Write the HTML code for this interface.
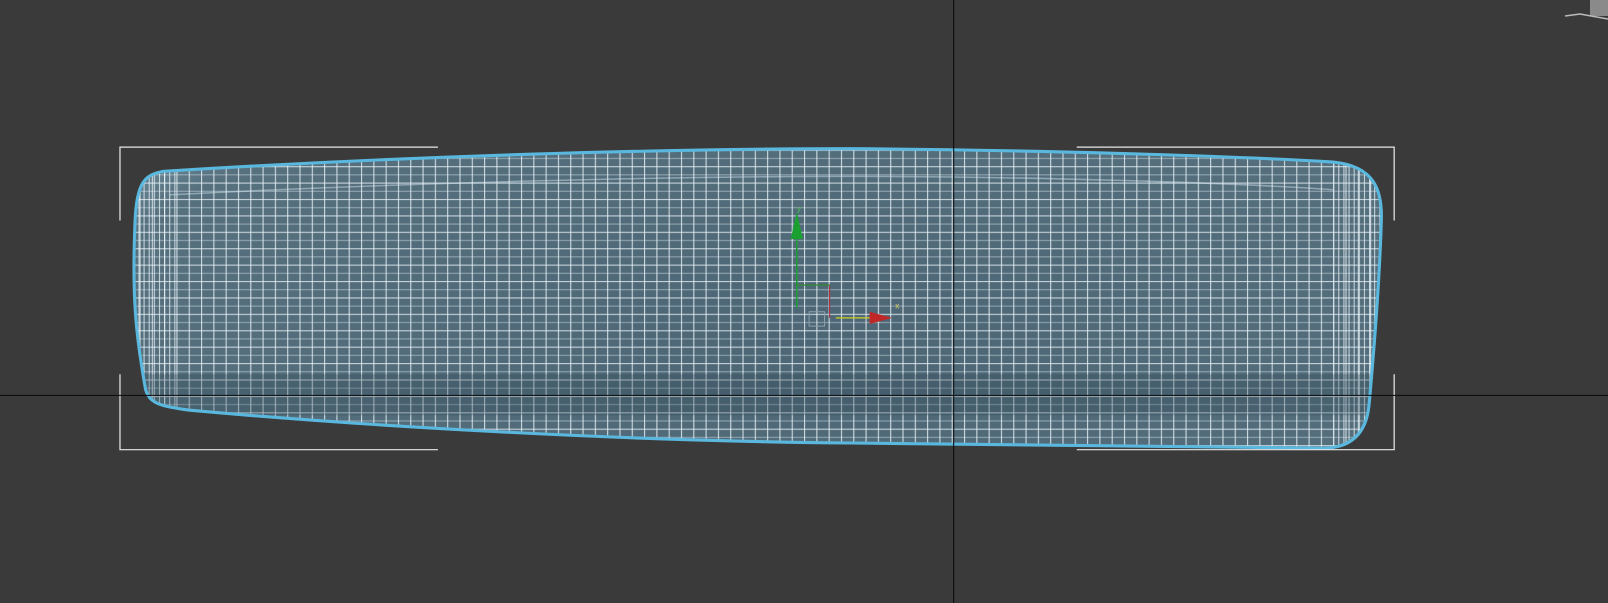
<!DOCTYPE html>
<html><head><style>
html,body{margin:0;padding:0;background:#3a3a3a;overflow:hidden}
svg{display:block}
</style></head><body>
<svg width="1608" height="603" viewBox="0 0 1608 603" xmlns="http://www.w3.org/2000/svg">
<defs>
<clipPath id="cp"><path id="sh" d="M160,167 C400,152 650,145 830,145 C1000,146 1200,152 1300,158 C1340,162 1348,185 1347,215 C1345,280 1340,340 1335,395 C1332,425 1315,437 1290,437 C1100,434 950,432 830,432 C600,430 350,415 185,400 C155,396 146,393 142,380 C133,330 128,290 132,210 C134,180 140,170 160,167 Z"/></clipPath>
<radialGradient id="g" cx="0.5" cy="0.55" r="0.6">
<stop offset="0" stop-color="#4d6675"/><stop offset="0.75" stop-color="#56707e"/><stop offset="1" stop-color="#8fb0c0"/></radialGradient>
<pattern id="v" width="12" height="603" patternUnits="userSpaceOnUse" x="4"><rect x="0" y="0" width="1.1" height="603" fill="#e8f2f8" opacity="0.8"/></pattern>
<pattern id="h" width="1608" height="16" patternUnits="userSpaceOnUse" y="2"><rect x="0" y="0" width="1608" height="1.1" fill="#e8f2f8" opacity="0.75"/><rect x="0" y="8" width="1608" height="1" fill="#e8f2f8" opacity="0.45"/></pattern>
<pattern id="v2" width="5" height="603" patternUnits="userSpaceOnUse"><rect width="1" height="603" fill="#e8f2f8" opacity="0.8"/></pattern>
</defs>
<g transform="scale(1.0255)">
<g clip-path="url(#cp)">
<rect width="1608" height="603" fill="url(#g)"/>
<rect width="1608" height="603" fill="url(#h)"/>
<rect width="1608" height="603" fill="url(#v)"/>
<rect x="130" width="45" height="603" fill="url(#v2)"/>
<rect x="1300" width="50" height="603" fill="url(#v2)"/>
<rect x="130" y="365" width="1220" height="40" fill="#2f4652" opacity="0.3"/>
<path d="M165,190 C400,178 650,172 830,172 C1000,172 1200,178 1300,185" fill="none" stroke="#d8ecf4" stroke-width="1.5" opacity="0.45"/>
</g>
<use href="#sh" fill="none" stroke="#5ab8de" stroke-width="3"/>
<g stroke="#e8e8e8" stroke-width="1.2" fill="none">
<path d="M117,215 V143.5 H427"/><path d="M117,365 V438.5 H427"/>
<path d="M1050,143.5 H1359.5 V215"/><path d="M1050,438.5 H1359.5 V365"/>
</g>
<line x1="930" y1="0" x2="930" y2="603" stroke="#0a0a0a" stroke-width="1"/>
<line x1="0" y1="385.5" x2="1608" y2="385.5" stroke="#0a0a0a" stroke-width="1"/>
<g>
<line x1="777" y1="300" x2="777" y2="225" stroke="#1aa030" stroke-width="1.5"/>
<polygon points="777,207 771,233 783,233" fill="#1aa030"/>
<path d="M777,278 H809 V310" stroke="#b02030" fill="none" stroke-width="1"/>
<line x1="777" y1="278" x2="809" y2="278" stroke="#1aa030" stroke-width="1"/>
<line x1="815" y1="310" x2="855" y2="310" stroke="#d0d020" stroke-width="1.2"/>
<polygon points="870,310 848,304 848,316" fill="#c02828"/>
<rect x="789" y="304" width="15" height="14" fill="none" stroke="#8aa0aa" stroke-width="1"/>
<text x="873" y="301" font-family="Liberation Sans,sans-serif" font-size="8" fill="#d0d060">x</text>
<text x="777" y="206" font-family="Liberation Sans,sans-serif" font-size="8" fill="#40c050">y</text>
</g>
</g>
<g>
<rect x="1590" y="0" width="18" height="16" fill="#8a8a8a"/>
<path d="M1565,16 L1580,14 L1608,19" stroke="#bbb" stroke-width="1.5" fill="none"/>
</g>
</svg>
</body></html>
